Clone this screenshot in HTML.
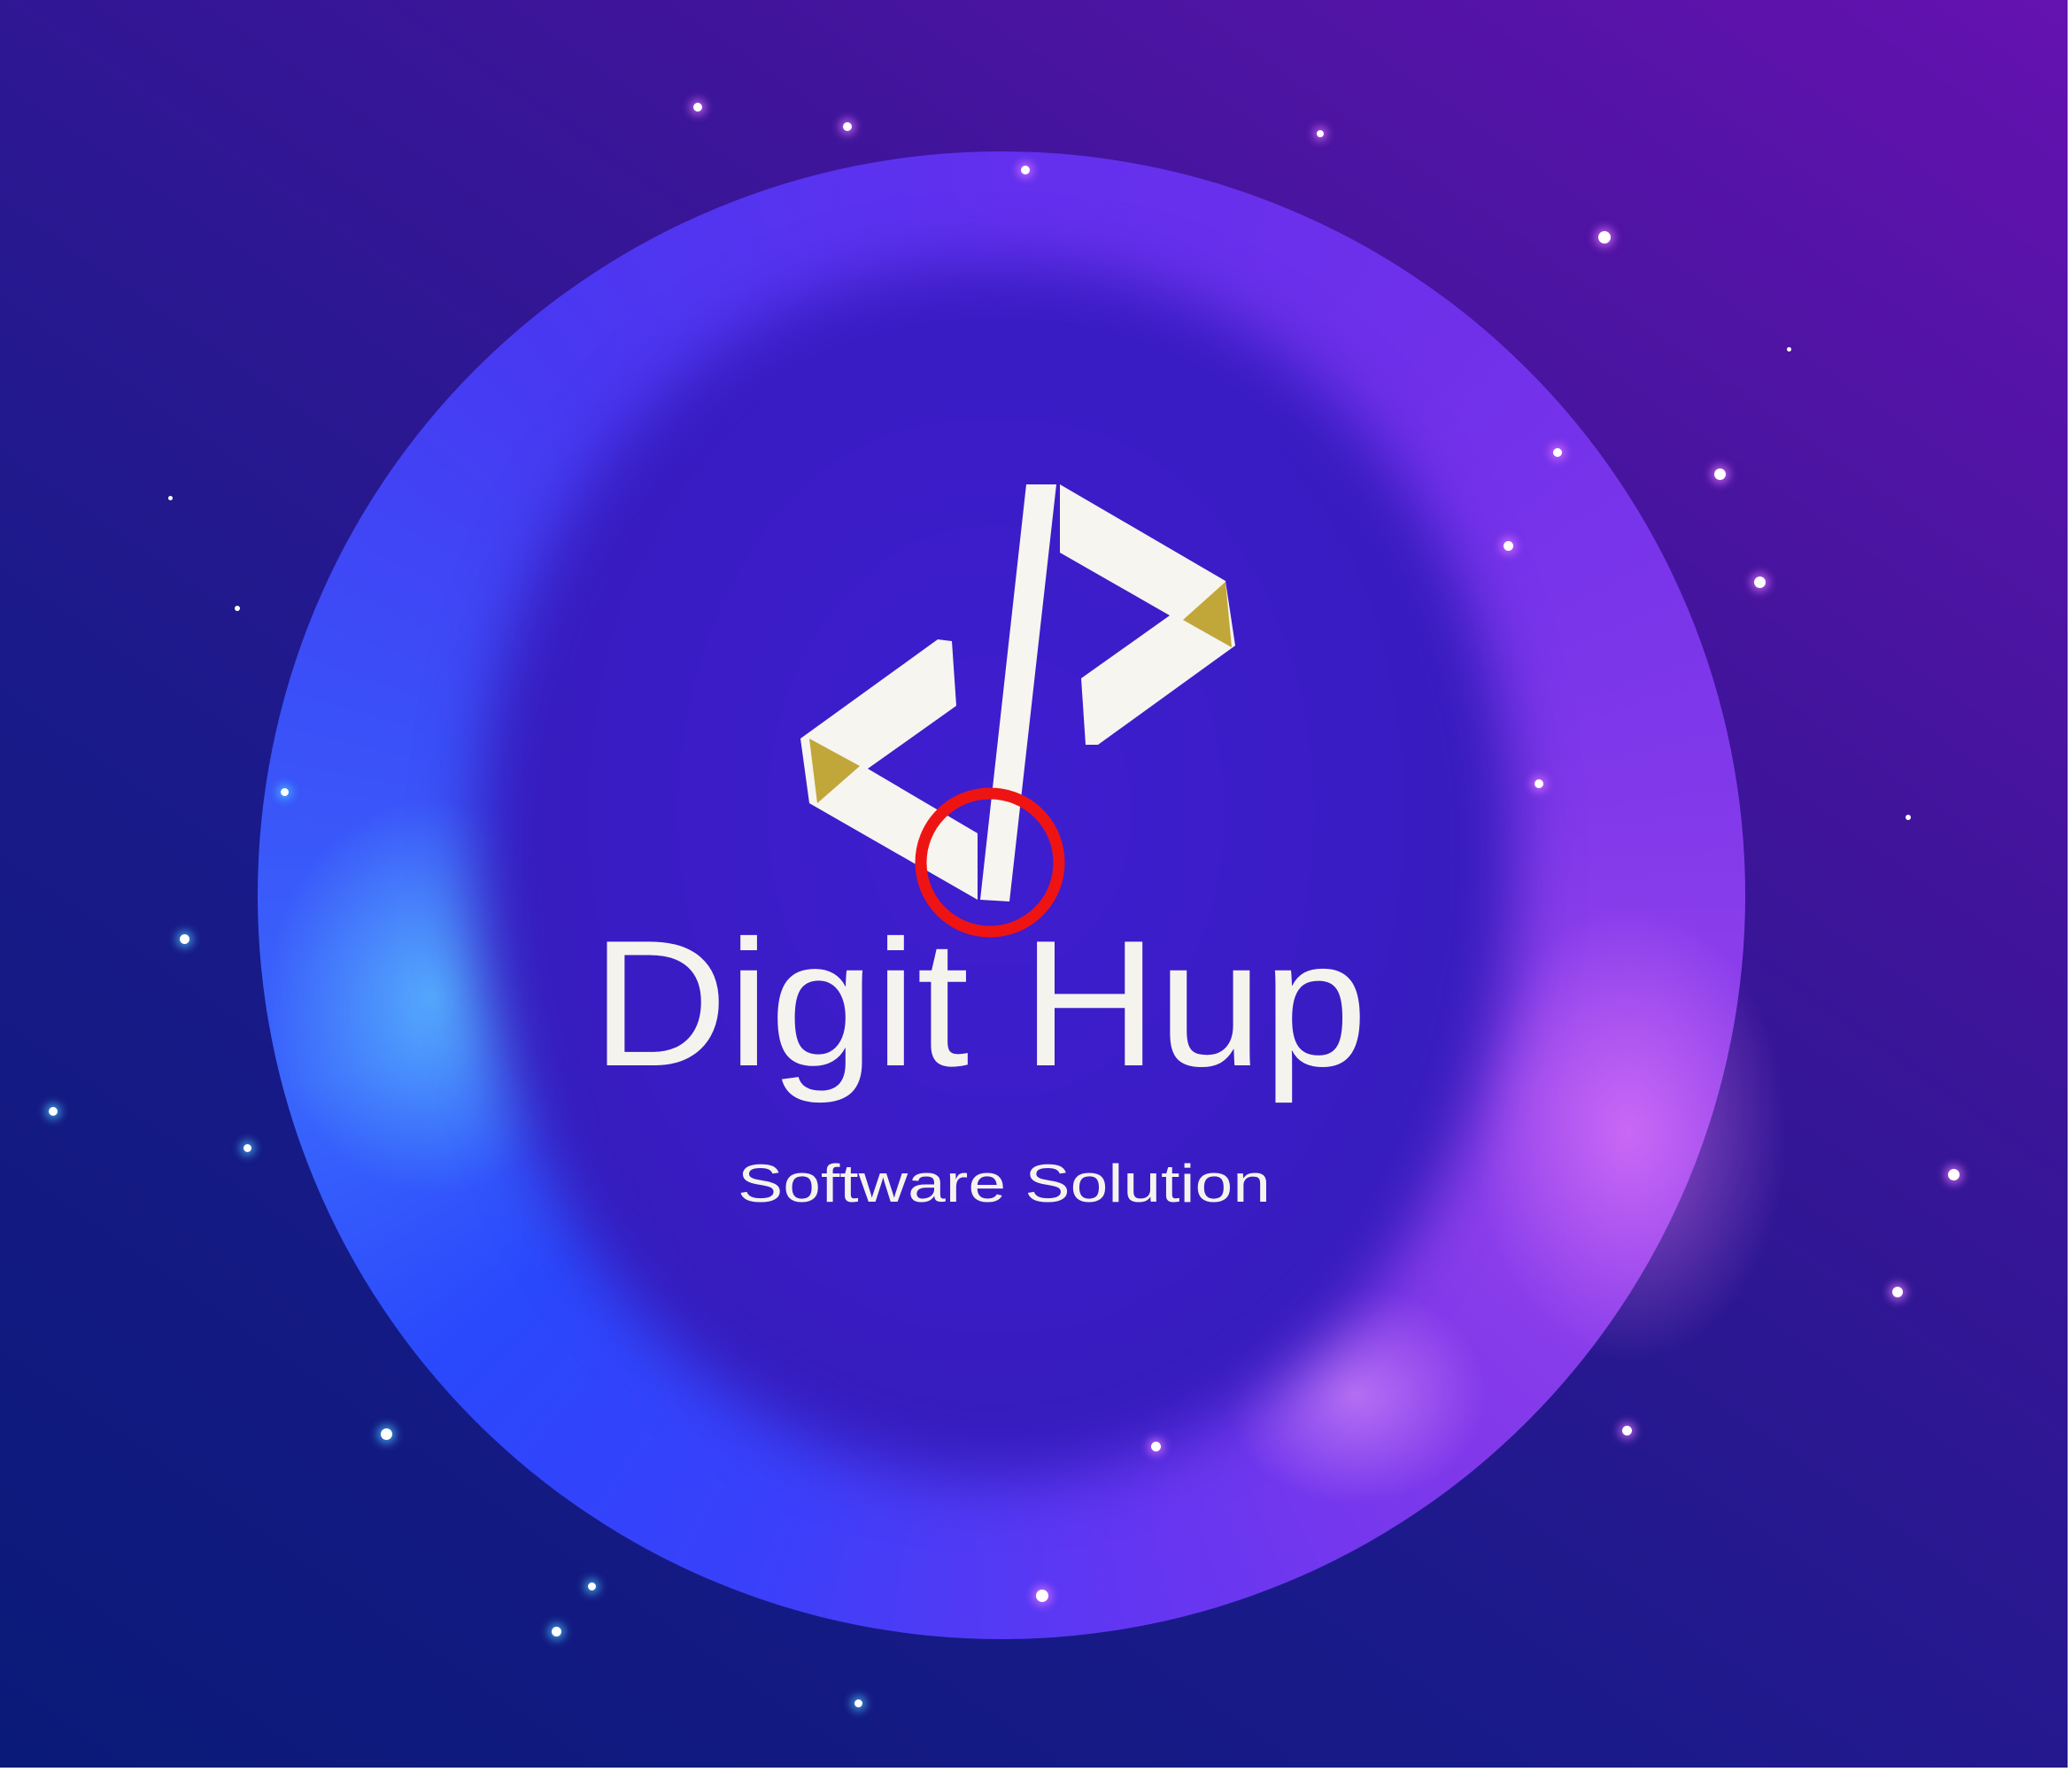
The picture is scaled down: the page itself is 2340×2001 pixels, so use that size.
<!DOCTYPE html>
<html><head><meta charset="utf-8"><style>
html,body{margin:0;padding:0}
body{width:2340px;height:2001px;overflow:hidden;position:relative;background:#fff}
#bg{position:absolute;left:0;top:0;width:2335px;height:1996px;
background:linear-gradient(35deg,#0a1a78 0%,#1a1a8a 35%,#3a1598 65%,#6512b0 100%);overflow:hidden}
.sph{position:absolute;left:291px;top:171px;width:1680px;height:1680px;border-radius:50%;
background:conic-gradient(from 0deg,#6230ee 0deg,#7030ea 40deg,#8038ea 80deg,#9444ec 110deg,#8038ea 140deg,#6236f2 170deg,#3a40fa 200deg,#2a48fc 230deg,#3a66fc 255deg,#3a50f8 285deg,#4838f2 320deg,#6230ee 360deg);}
.glowL{position:absolute;left:300px;top:900px;width:380px;height:450px;border-radius:50%;
background:radial-gradient(ellipse at center,rgba(110,240,255,.5),rgba(80,160,255,0) 70%)}
.glowR{position:absolute;left:1660px;top:1020px;width:360px;height:520px;border-radius:50%;
background:radial-gradient(ellipse at center,rgba(255,140,255,.5),rgba(220,90,255,0) 70%)}
.glowB{position:absolute;left:1380px;top:1450px;width:300px;height:250px;border-radius:50%;
background:radial-gradient(ellipse at center,rgba(255,180,255,.45),rgba(220,90,255,0) 70%)}
.inner{position:absolute;left:540px;top:300px;width:1170px;height:1370px;border-radius:48% 48% 50% 50%;
background:#3a1dc4;filter:blur(35px);
background:radial-gradient(ellipse at 50% 45%,#3e1ed0 0%,#3a1cc4 50%,#311cb6 85%,#3420c0 100%)}
.star{position:absolute;border-radius:50%;background:#fff}
.s1{box-shadow:0 0 10px 4px rgba(230,120,255,.7)}
.s2{box-shadow:0 0 10px 4px rgba(80,200,255,.7)}
.t1{position:absolute;left:668px;top:1032px;font:203px "Liberation Sans",sans-serif;color:#f5f3ee;white-space:nowrap;transform-origin:0 0;transform:scaleX(1.05);line-height:1}
.t2{position:absolute;left:833px;top:1307px;font:60px "Liberation Sans",sans-serif;color:#f5f3ee;white-space:nowrap;transform-origin:0 0;transform:scaleX(1.28);line-height:1}
</style></head><body>
<div id="bg">
<div class="sph"></div>
<div class="glowL"></div><div class="glowR"></div><div class="glowB"></div>
<div class="inner"></div>
<div class="star s1" style="left:783px;top:116px;width:10px;height:10px"></div>
<div class="star s1" style="left:952px;top:138px;width:10px;height:10px"></div>
<div class="star s1" style="left:1153px;top:187px;width:10px;height:10px"></div>
<div class="star s1" style="left:1805px;top:261px;width:14px;height:14px"></div>
<div class="star s1" style="left:1936px;top:529px;width:13px;height:13px"></div>
<div class="star s1" style="left:1981px;top:651px;width:13px;height:13px"></div>
<div class="star s1" style="left:1698px;top:611px;width:11px;height:11px"></div>
<div class="star s1" style="left:1754px;top:506px;width:10px;height:10px"></div>
<div class="star s1" style="left:2200px;top:1320px;width:13px;height:13px"></div>
<div class="star s1" style="left:2137px;top:1453px;width:12px;height:12px"></div>
<div class="star s1" style="left:1832px;top:1610px;width:11px;height:11px"></div>
<div class="star s1" style="left:1733px;top:880px;width:10px;height:10px"></div>
<div class="star s1" style="left:1487px;top:147px;width:8px;height:8px"></div>
<div class="star s2" style="left:203px;top:1055px;width:11px;height:11px"></div>
<div class="star s2" style="left:55px;top:1250px;width:10px;height:10px"></div>
<div class="star s2" style="left:430px;top:1613px;width:13px;height:13px"></div>
<div class="star s2" style="left:623px;top:1837px;width:11px;height:11px"></div>
<div class="star s2" style="left:664px;top:1787px;width:9px;height:9px"></div>
<div class="star s2" style="left:275px;top:1292px;width:9px;height:9px"></div>
<div class="star s2" style="left:317px;top:890px;width:9px;height:9px"></div>
<div class="star s2" style="left:965px;top:1919px;width:9px;height:9px"></div>
<div class="star s1" style="left:1300px;top:1628px;width:11px;height:11px"></div>
<div class="star s1" style="left:1170px;top:1795px;width:14px;height:14px"></div>
<div class="star" style="left:265px;top:684px;width:6px;height:6px"></div>
<div class="star" style="left:190px;top:560px;width:5px;height:5px"></div>
<div class="star" style="left:2018px;top:392px;width:5px;height:5px"></div>
<div class="star" style="left:2152px;top:920px;width:6px;height:6px"></div>
<svg width="2335" height="1996" style="position:absolute;left:0;top:0">
<polygon fill="#f6f5ef" points="1159,547 1193,547 1140,1018 1107,1016"/>
<polygon fill="#f6f5ef" points="1059,722 1075,724 1080,797 980,868 1104,941 1104,1016 914,907 904,834"/>
<polygon fill="#c1a63a" points="914,834 971,865 923,907"/>
<polygon fill="#f6f5ef" points="1197,547 1384,656 1395,729 1240,841 1226,841 1221,766 1321,695 1197,624"/>
<polygon fill="#c1a63a" points="1384,657 1336,700 1391,731"/>
<circle cx="1118" cy="974" r="78" fill="none" stroke="#ee1414" stroke-width="13"/>
</svg>
<div class="t1">Digit Hup</div>
<div class="t2">Software Solution</div>
</div>
</body></html>
